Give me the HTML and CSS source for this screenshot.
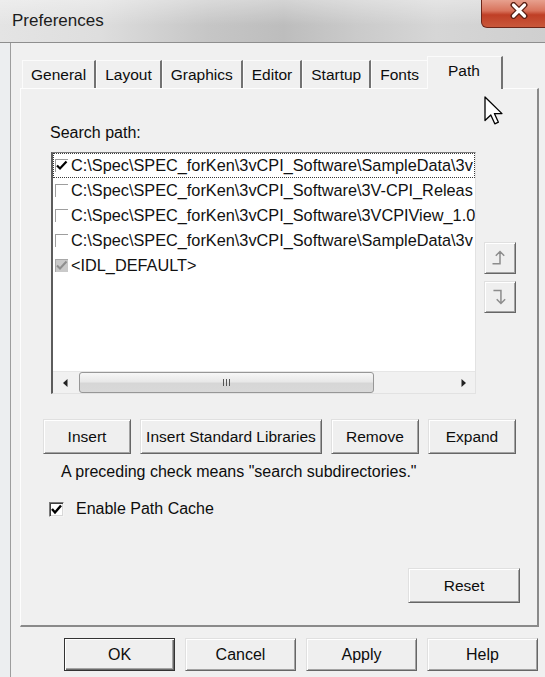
FILE: index.html
```html
<!DOCTYPE html>
<html lang="en">
<head>
<meta charset="utf-8">
<title>Preferences</title>
<link rel="stylesheet" href="styles.css">
</head>
<body>
<div class="window">
  <div class="titlebar">
    <span class="title">Preferences</span>
    <div class="close">
      <svg width="20" height="17" viewBox="0 0 20 17">
        <path d="M4.5 3 L15.5 14 M15.5 3 L4.5 14" stroke="#5b2014" stroke-width="6" stroke-linecap="round"/>
        <path d="M4.5 3 L15.5 14 M15.5 3 L4.5 14" stroke="#fff" stroke-width="3.2" stroke-linecap="round"/>
      </svg>
    </div>
  </div>

  <div class="frame">
    <div class="frame-edge"></div>
    <div class="client">
      <div class="tabs">
        <div class="tab">General</div>
        <div class="tab">Layout</div>
        <div class="tab">Graphics</div>
        <div class="tab">Editor</div>
        <div class="tab">Startup</div>
        <div class="tab">Fonts</div>
        <div class="tab active">Path</div>
      </div>

      <div class="panel">
        <div class="label">Search path:</div>

        <div class="list-row">
          <div class="listbox">
            <div class="items">
              <div class="item focus">
                <span class="cb"><svg width="13" height="13" viewBox="0 0 13 13"><path d="M2 6.5 L5 9.5 L11.5 2.5" fill="none" stroke="#000" stroke-width="2.2"/></svg></span>
                <span class="path">C:\Spec\SPEC_forKen\3vCPI_Software\SampleData\3v</span>
              </div>
              <div class="item">
                <span class="cb"></span>
                <span class="path">C:\Spec\SPEC_forKen\3vCPI_Software\3V-CPI_Releas</span>
              </div>
              <div class="item">
                <span class="cb"></span>
                <span class="path">C:\Spec\SPEC_forKen\3vCPI_Software\3VCPIView_1.0</span>
              </div>
              <div class="item">
                <span class="cb"></span>
                <span class="path">C:\Spec\SPEC_forKen\3vCPI_Software\SampleData\3v</span>
              </div>
              <div class="item">
                <span class="cb disabled"><svg width="13" height="13" viewBox="0 0 13 13"><path d="M2 6.5 L5 9.5 L11.5 2.5" fill="none" stroke="#8e8e8e" stroke-width="2"/></svg></span>
                <span class="path">&lt;IDL_DEFAULT&gt;</span>
              </div>
            </div>
            <div class="hscroll">
              <div class="sb-btn"><svg width="5" height="8" viewBox="0 0 5 8"><path d="M4.5 0 L0 4 L4.5 8 Z" fill="#222"/></svg></div>
              <div class="track">
                <div class="thumb">
                  <svg width="7" height="7" viewBox="0 0 7 7"><path d="M0.5 0 V7 M3.5 0 V7 M6.5 0 V7" stroke="#555" stroke-width="1"/></svg>
                </div>
              </div>
              <div class="sb-btn"><svg width="5" height="8" viewBox="0 0 5 8"><path d="M0.5 0 L5 4 L0.5 8 Z" fill="#222"/></svg></div>
            </div>
          </div>

          <div class="movers">
            <div class="btn mover">
              <svg width="32" height="32" viewBox="0 0 32 32">
                <path d="M8 22 H16 V9 M11.5 13.5 L16 9 L20.5 13.5" fill="none" stroke="#8c8c8c" stroke-width="1.6"/>
              </svg>
            </div>
            <div class="btn mover">
              <svg width="32" height="32" viewBox="0 0 32 32">
                <path d="M9 9 H17 V23 M12.5 18.5 L17 23 L21.5 18.5" fill="none" stroke="#8c8c8c" stroke-width="1.6"/>
              </svg>
            </div>
          </div>
        </div>

        <div class="btn-row">
          <div class="btn">Insert</div>
          <div class="btn">Insert Standard Libraries</div>
          <div class="btn">Remove</div>
          <div class="btn">Expand</div>
        </div>

        <div class="hint">A preceding check means "search subdirectories."</div>

        <div class="check-row">
          <span class="checkbox"><svg width="13" height="13" viewBox="0 0 13 13"><path d="M2 6 L5 9.5 L11 2.5" fill="none" stroke="#000" stroke-width="2.4"/></svg></span>
          <span>Enable Path Cache</span>
        </div>

        <div class="reset-row">
          <div class="btn reset">Reset</div>
        </div>
      </div>

      <div class="footer">
        <div class="btn dlg default">OK</div>
        <div class="btn dlg">Cancel</div>
        <div class="btn dlg">Apply</div>
        <div class="btn dlg">Help</div>
      </div>
    </div>
  </div>

  <svg class="cursor" width="19" height="29" viewBox="0 0 19 29">
    <path d="M1 1 V24.5 L6.8 19 L10.8 27.8 L14.4 26.2 L10.4 17.6 L18 17.6 Z" fill="#fff" stroke="#000" stroke-width="1.3" stroke-linejoin="round"/>
  </svg>
</div>
</body>
</html>
```
FILE: styles.css
```css
* { box-sizing: border-box; }

html, body {
  margin: 0;
  padding: 0;
}

body {
  width: 545px;
  height: 677px;
  overflow: hidden;
  background: #f0f0f0;
  font-family: "Liberation Sans", Arial, sans-serif;
  font-size: 16px;
  color: #0d0d0d;
}

.window {
  position: relative;
  display: flex;
  flex-direction: column;
  height: 677px;
}

/* ---- caption bar ---- */
.titlebar {
  flex: none;
  height: 43px;
  display: flex;
  align-items: flex-start;
  overflow: hidden;
  border-bottom: 1px solid #8e8e8e;
  background:
    linear-gradient(180deg, rgba(255,255,255,0.35), rgba(255,255,255,0) 60%),
    linear-gradient(90deg, #e4e4e4 0%, #dedede 18%, #c6c6c6 38%, #bdbdbd 52%, #cbcbcb 66%, #d6d6d6 80%, #cfcfcf 100%);
}

.title {
  padding: 11px 0 0 12px;
  font-size: 17px;
  line-height: 20px;
  color: #1c1c1c;
}

.close {
  margin-left: auto;
  margin-right: -11px;
  width: 75px;
  height: 28px;
  display: flex;
  justify-content: center;
  padding-top: 2px;
  border: 1px solid #6d2619;
  border-top: none;
  border-radius: 0 0 6px 6px;
  background: linear-gradient(180deg, #e7a08e 0%, #d8735c 40%, #bf3f26 55%, #c9583b 100%);
}

/* ---- window body ---- */
.frame {
  flex: 1;
  display: flex;
}

.frame-edge {
  flex: none;
  width: 11px;
  background: #eceef0;
  border-right: 1px solid #9d9d9d;
}

.client {
  flex: 1;
  display: flex;
  flex-direction: column;
  padding: 13px 6px 0 9px;
}

/* ---- tab strip ---- */
.tabs {
  display: flex;
  align-items: flex-end;
  height: 32px;
  margin-left: 2px;
  position: relative;
  z-index: 1;
}

.tab {
  height: 28px;
  display: flex;
  align-items: center;
  padding: 0 8px;
  font-size: 15.5px;
  border-top: 1px solid #fbfbfb;
  border-left: 1px solid #fbfbfb;
  border-right: 2px solid #727272;
}

.tab.active {
  height: 33px;
  margin-bottom: -1px;
  margin-left: -2px;
  padding: 0 21px 4px 20px;
  background: #f0f0f0;
  position: relative;
}

/* ---- page body ---- */
.panel {
  height: 539px;
  display: flex;
  flex-direction: column;
  padding: 35px 21px 22px 22px;
  border-top: 1px solid #fdfdfd;
  border-left: 1px solid #fdfdfd;
  border-right: 2px solid #8a8a8a;
  border-bottom: 2px solid #8a8a8a;
}

.label {
  margin-left: 7px;
  line-height: 18px;
}

.list-row {
  display: flex;
  gap: 8px;
  margin-top: 10px;
  margin-left: 8px;
}

.listbox {
  width: 425px;
  height: 242px;
  display: flex;
  flex-direction: column;
  background: #fff;
  border-style: solid;
  border-width: 1px 1px 1px 2px;
  border-color: #7c7c7c #e2e2e2 #e2e2e2 #5c5c5c;
}

.items {
  flex: 1;
  overflow: hidden;
}

.item {
  height: 25px;
  display: flex;
  align-items: center;
  white-space: nowrap;
  font-size: 16.3px;
  color: #111;
}

.item.focus {
  outline: 1px dotted #3a3a3a;
  outline-offset: -1px;
}

.cb {
  flex: none;
  width: 13px;
  height: 13px;
  margin: 0 3px 0 2px;
  border-top: 1px solid #9e9e9e;
  border-left: 1px solid #9e9e9e;
  display: flex;
}

.cb svg { margin: -1px 0 0 -1px; }

.cb.disabled {
  background: #c9c9c9;
  border-color: #a8a8a8;
}

.path { flex: none; }

/* horizontal scroll bar */
.hscroll {
  flex: none;
  height: 22px;
  display: flex;
  background: #f1f1f1;
  border-top: 1px solid #e6e6e6;
}

.sb-btn {
  flex: none;
  width: 24px;
  display: flex;
  align-items: center;
  justify-content: center;
}

.track {
  flex: 1;
  padding: 0 2px;
}

.thumb {
  width: 295px;
  height: 100%;
  display: flex;
  align-items: center;
  justify-content: center;
  border: 1px solid #979797;
  border-radius: 3px;
  background: linear-gradient(180deg, #f7f7f7 0%, #e8e8e8 45%, #d6d6d6 55%, #d9d9d9 100%);
}

/* move up / move down */
.movers {
  display: flex;
  flex-direction: column;
  gap: 7px;
  padding-top: 90px;
}

/* ---- buttons ---- */
.btn {
  display: flex;
  align-items: center;
  justify-content: center;
  font-size: 15.5px;
  white-space: nowrap;
  background: #efefef;
  border: 1px solid;
  border-color: #e0e0e0 #666 #666 #e0e0e0;
  box-shadow: inset 1px 1px 0 #fff, inset -1px -1px 0 #a3a3a3;
}

.mover {
  width: 32px;
  height: 32px;
}

.btn-row {
  display: flex;
  justify-content: space-between;
  margin-top: 25px;
}

.btn-row .btn {
  height: 35px;
  min-width: 88px;
  padding: 0 5px;
}

.hint {
  margin: 9px 0 0 18px;
  line-height: 18px;
}

.check-row {
  display: flex;
  align-items: center;
  gap: 12px;
  margin: 19px 0 0 6px;
  line-height: 18px;
}

.checkbox {
  flex: none;
  width: 15px;
  height: 15px;
  display: flex;
  align-items: center;
  justify-content: center;
  background: #fff;
  border: 1px solid;
  border-color: #7a7a7a #f4f4f4 #f4f4f4 #7a7a7a;
  box-shadow: inset 1px 1px 0 #404040, inset -1px -1px 0 #d8d8d8;
}

.reset-row {
  margin-top: auto;
  margin-right: -4px;
  display: flex;
  justify-content: flex-end;
}

.reset {
  width: 112px;
  height: 35px;
}

/* ---- dialog buttons ---- */
.footer {
  display: flex;
  gap: 10px;
  padding: 11px 0 0 44px;
}

.dlg {
  width: 111px;
  height: 33px;
  font-size: 16px;
}

.dlg.default {
  border: 1px solid #333;
  box-shadow: inset 1px 1px 0 #fff, inset -1px -1px 0 #6a6a6a, inset -2px -2px 0 #a3a3a3;
}

/* mouse pointer hovering near the tab strip */
.cursor {
  position: absolute;
  left: 484px;
  top: 96px;
}
```
